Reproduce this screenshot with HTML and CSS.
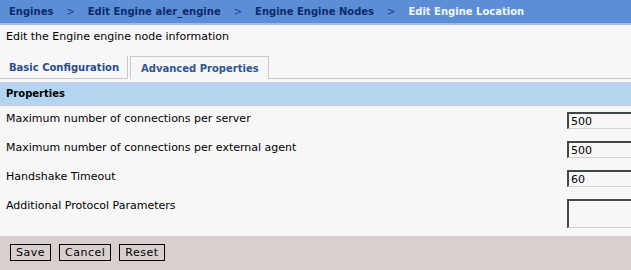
FILE: index.html
```html
<!DOCTYPE html>
<html lang="en">
<head>
    <meta charset="UTF-8">
    <title>Edit Engine Location</title>
    <link rel="stylesheet" href="styles.css">
</head>
<body>
    <div class="crumbs">
        <span class="crumb">Engines</span>
        <span class="sep">&gt;</span>
        <span class="crumb">Edit Engine aler_engine</span>
        <span class="sep">&gt;</span>
        <span class="crumb">Engine Engine Nodes</span>
        <span class="sep">&gt;</span>
        <span class="crumb current">Edit Engine Location</span>
    </div>

    <div class="intro">Edit the Engine engine node information</div>

    <div class="tabs">
        <div class="tab">Basic Configuration</div>
        <div class="tab active">Advanced Properties</div>
        <div class="tab-fill"></div>
    </div>

    <div class="section-head">Properties</div>

    <div class="props">
        <div class="prop">
            <label for="maxServer">Maximum number of connections per server</label>
            <input type="text" id="maxServer" value="500">
        </div>
        <div class="prop">
            <label for="maxAgent">Maximum number of connections per external agent</label>
            <input type="text" id="maxAgent" value="500">
        </div>
        <div class="prop">
            <label for="timeout">Handshake Timeout</label>
            <input type="text" id="timeout" value="60">
        </div>
        <div class="prop tall">
            <label for="params">Additional Protocol Parameters</label>
            <textarea id="params"></textarea>
        </div>
    </div>

    <div class="actions">
        <button type="button">Save</button>
        <button type="button">Cancel</button>
        <button type="button">Reset</button>
    </div>
</body>
</html>
```

FILE: styles.css
```css
body {
    margin: 0;
    background: #f7f7f7;
    font-family: 'DejaVu Sans', Verdana, sans-serif;
    font-size: 11px;
    color: #000;
    width: 631px;
    height: 270px;
    overflow: hidden;
}

.crumbs {
    display: flex;
    align-items: center;
    height: 23px;
    padding-left: 9px;
    background: #5b8ed6;
    border-bottom: 2px solid #9cbde8;
    font-size: 10px;
    font-weight: bold;
    color: #0e2a6e;
    white-space: nowrap;
}

.sep {
    padding: 0 13px;
    font-weight: normal;
    color: #1c3a80;
}

.crumb.current {
    color: #f2f6ff;
}

.intro {
    padding: 5px 0 0 6px;
    height: 19px;
}

.tabs {
    display: flex;
    margin-top: 7px;
    height: 23px;
    font-size: 10px;
}

.tab {
    padding: 6px 8px 0 8px;
    font-weight: bold;
    color: #2a4c8c;
    border-right: 1px solid #c8c8c8;
    border-bottom: 1px solid #c8c8c8;
    white-space: nowrap;
}

.tab:first-child {
    padding-left: 9px;
}

.tab.active {
    margin-left: 2px;
    padding: 6px 9px 0 10px;
    border: 1px solid #c8c8c8;
    border-bottom: none;
    color: #2f5496;
}

.tab-fill {
    flex: 1;
    border-bottom: 1px solid #c8c8c8;
}

.section-head {
    margin-top: 3px;
    height: 20px;
    line-height: 20px;
    padding-left: 6px;
    background: #b4d5ef;
    border-top: 2px solid #c8ccf0;
    border-bottom: 2px solid #c8ccf0;
    font-size: 10px;
    font-weight: bold;
}

.props {
    padding-top: 6px;
}

.prop {
    display: flex;
    align-items: flex-start;
    height: 29px;
}

.prop.tall {
    height: 37px;
}

.prop label {
    width: 561px;
    padding-left: 6px;
    flex-shrink: 0;
}

.prop input,
.prop textarea {
    width: 120px;
    height: 17px;
    margin: 0;
    padding: 0 2px;
    box-sizing: border-box;
    background: #f7f7f7;
    border-style: solid;
    border-width: 2px 1px 1px 2px;
    border-color: #404848 #d4d0d8 #d4d0d8 #404848;
    font-family: 'DejaVu Sans', Verdana, sans-serif;
    font-size: 11px;
    flex-shrink: 0;
}

.prop textarea {
    height: 29px;
    resize: none;
}

.actions {
    display: flex;
    gap: 8px;
    height: 34px;
    padding: 8px 0 0 10px;
    box-sizing: border-box;
    background: #d8cfcf;
}

.actions button {
    height: 17px;
    padding: 0 5px;
    border: 1px solid #000;
    background: #d8cfcf;
    font-family: 'DejaVu Sans', Verdana, sans-serif;
    font-size: 11px;
    color: #000;
    letter-spacing: 0.5px;
}
```
